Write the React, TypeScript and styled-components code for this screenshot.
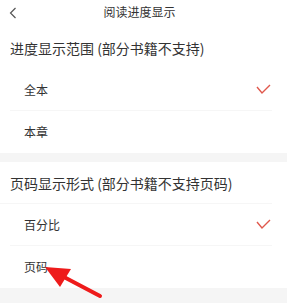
import styled, { createGlobalStyle } from "styled-components";

const GlobalStyle = createGlobalStyle`
    html, body {
        margin: 0;
        padding: 0;
        background: #f5f5f5;
    }
    body {
        font-family: "Noto Sans CJK SC", "Noto Sans", sans-serif;
        color: #333;
    }
`;

const Page = styled.div`
    position: relative;
    width: 287px;
    height: 303px;
    overflow: hidden;
    background: #f5f5f5;
`;

const Header = styled.div`
    position: relative;
    height: 27px;
    background: #fff;
    display: flex;
    align-items: center;
    justify-content: center;
    padding-right: 8px;
`;

const BackButton = styled.div`
    position: absolute;
    left: 9px;
    top: 7px;
    width: 10px;
    height: 12px;
    display: flex;
`;

const Title = styled.div`
    font-size: 12px;
    line-height: 12px;
    color: #333;
    margin-top: -3px;
`;

const Section = styled.div`
    background: #fff;
`;

const SectionTitle = styled.div<{ $divider?: boolean }>`
    height: 42px;
    display: flex;
    align-items: center;
    padding-left: 10px;
    font-size: 14px;
    color: #333;
    box-sizing: border-box;
    border-bottom: 1px solid ${(p) => (p.$divider ? "#f6f6f6" : "transparent")};
    margin: 0 15px 0 0;
`;

const Row = styled.div<{ $last?: boolean }>`
    height: 42px;
    display: flex;
    align-items: center;
    justify-content: space-between;
    margin: 0 15px 0 10px;
    padding: 0 1px 0 14px;
    box-sizing: border-box;
    font-size: 12px;
    color: #333;
    border-bottom: 1px solid ${(p) => (p.$last ? "transparent" : "#f6f6f6")};
`;

const Band = styled.div`
    height: 9px;
    background: #f5f5f5;
`;

const Arrow = styled.svg`
    position: absolute;
    left: 40px;
    top: 258px;
`;

const Check = () => (
    <svg width="15" height="11" viewBox="0 0 15 11">
        <polyline
            points="1,3 6,9 14,1"
            fill="none"
            stroke="#e0584c"
            strokeWidth="1.4"
        />
    </svg>
);

export default function App() {
    return (
        <Page>
            <GlobalStyle />
            <Header>
                <BackButton>
                    <svg width="8" height="12" viewBox="0 0 8 12">
                        <polyline
                            points="6.5,1 1.5,6 6.5,11"
                            fill="none"
                            stroke="#555"
                            strokeWidth="1.2"
                        />
                    </svg>
                </BackButton>
                <Title>阅读进度显示</Title>
            </Header>
            <Section>
                <SectionTitle>进度显示范围 (部分书籍不支持)</SectionTitle>
                <Row>
                    <span>全本</span>
                    <Check />
                </Row>
                <Row $last>
                    <span>本章</span>
                </Row>
            </Section>
            <Band />
            <Section>
                <SectionTitle $divider>页码显示形式 (部分书籍不支持页码)</SectionTitle>
                <Row>
                    <span>百分比</span>
                    <Check />
                </Row>
                <Row $last>
                    <span>页码</span>
                </Row>
            </Section>
            <Arrow width="70" height="45" viewBox="0 0 70 45">
                <line x1="60" y1="38" x2="22" y2="18" stroke="#ee1b1b" strokeWidth="4" strokeLinecap="round" />
                <polygon points="5,9 31,11 20,29" fill="#ee1b1b" />
            </Arrow>
        </Page>
    );
}
